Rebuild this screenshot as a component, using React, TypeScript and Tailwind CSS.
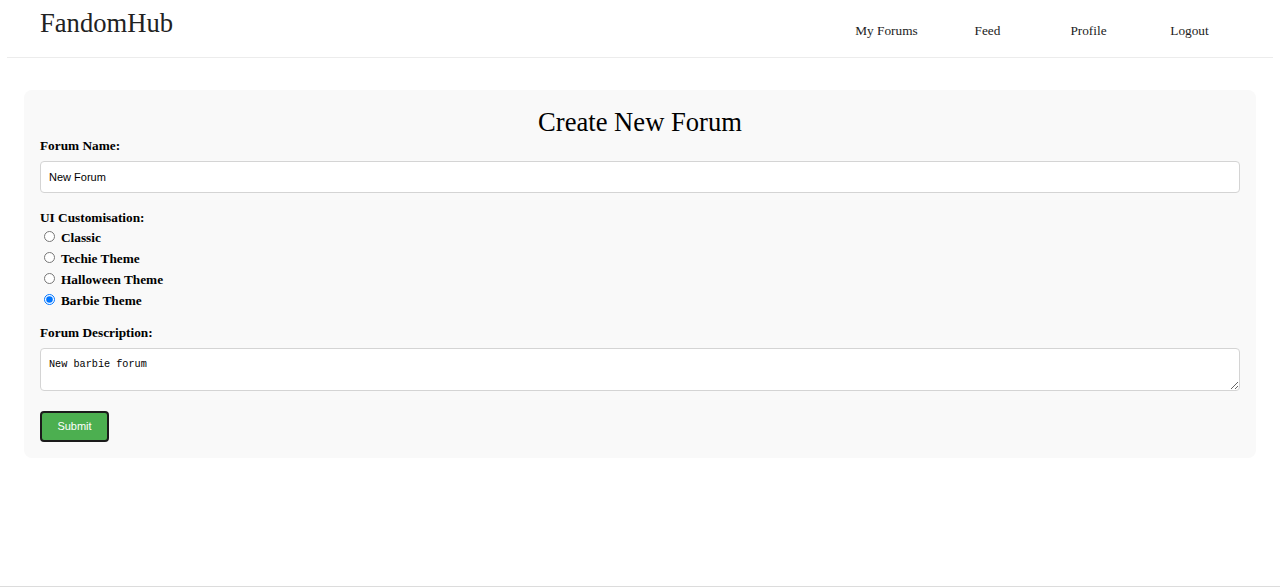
import React from "react";

const themes = ["Classic", "Techie Theme", "Halloween Theme", "Barbie Theme"];

const App: React.FC = () => {
    return (
        <div className="min-h-screen flex flex-col bg-white font-['Liberation_Serif',serif] text-black">
            {/* Header */}
            <header className="mx-[7px] h-[58px] border-b border-[#ececec] flex justify-between items-start px-[33px]">
                <div className="pt-[8px] text-[26.6px] leading-[31px] text-[#222]">FandomHub</div>
                <nav className="flex pt-[23px] text-[13.3px] leading-[16px] text-[#222]">
                    <a className="w-[101px] text-center">My Forums</a>
                    <a className="w-[101px] text-center">Feed</a>
                    <a className="w-[101px] text-center">Profile</a>
                    <a className="w-[101px] text-center">Logout</a>
                </nav>
            </header>

            {/* Form card */}
            <main className="mx-[24px] mt-[32px] rounded-lg bg-[#f9f9f9] p-4">
                <h1 className="text-center text-[26.6px] leading-[31px] mt-[1px]">Create New Forum</h1>

                <label className="block font-bold text-[13.3px] leading-[15px]">Forum Name:</label>
                <input
                    type="text"
                    defaultValue="New Forum"
                    className="block w-full mt-[8px] h-[32px] px-[8px] border border-[#d4d4d4] rounded-[4px] bg-white font-['Liberation_Sans',sans-serif] text-[11px] text-black outline-none"
                />

                <label className="block font-bold text-[13.3px] leading-[15px] mt-[17px]">UI Customisation:</label>
                <div className="flex flex-col mt-[2px]">
                    {themes.map((t) => (
                        <label key={t} className="flex items-center h-[21px] font-bold text-[13.3px]">
                            <input
                                type="radio"
                                name="theme"
                                defaultChecked={t === "Barbie Theme"}
                                className="w-[11px] h-[11px] m-0 ml-[4px] mr-[6px] -translate-y-[1px]"
                            />
                            <span>{t}</span>
                        </label>
                    ))}
                </div>

                <label className="block font-bold text-[13.3px] leading-[15px] mt-[14px]">Forum Description:</label>
                <textarea
                    defaultValue="New barbie forum"
                    className="block w-full mt-[8px] h-[43px] px-[8px] pt-[10px] pb-[6px] border border-[#d4d4d4] rounded-[4px] bg-white font-['Liberation_Mono',monospace] text-[10.2px] leading-[12px] text-black outline-none"
                />

                <button className="block mt-[20px] w-[69px] h-[31px] rounded-[4px] border-2 border-[#1b1b1b] bg-[#4caf50] text-white font-['Liberation_Sans',sans-serif] text-[11px]">
                    Submit
                </button>
            </main>

            <div className="flex-1" />
            <div className="h-px bg-[#dcdcdc]" />
        </div>
    );
};

export default App;
